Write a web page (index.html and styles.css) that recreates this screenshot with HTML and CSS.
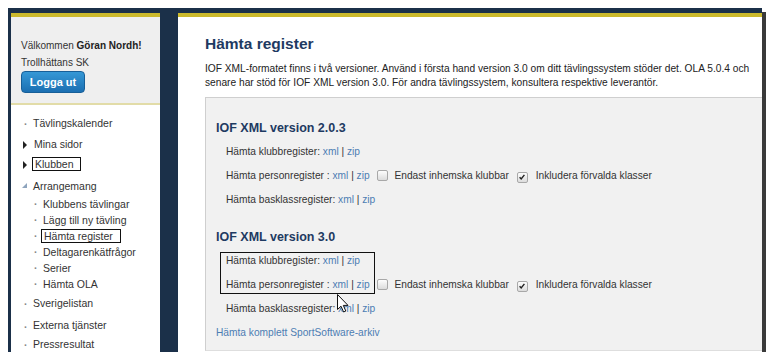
FILE: index.html
```html
<!DOCTYPE html>
<html lang="sv">
<head>
  <meta charset="utf-8">
  <title>Hämta register</title>
  <link rel="stylesheet" href="styles.css">
</head>
<body>

  <div class="frame">
    <aside class="sidebar">
      <div class="welcome">
        <p>Välkommen <b>Göran Nordh!</b></p>
        <p>Trollhättans SK</p>
        <button class="logout">Logga ut</button>
      </div>

      <ul class="nav">
        <li class="dot">Tävlingskalender</li>
        <li class="closed">Mina sidor</li>
        <li class="closed"><span class="mark">Klubben</span></li>
        <li class="open">Arrangemang
          <ul class="sub">
            <li>Klubbens tävlingar</li>
            <li>Lägg till ny tävling</li>
            <li><span class="mark wide">Hämta register</span></li>
            <li>Deltagarenkätfrågor</li>
            <li>Serier</li>
            <li>Hämta OLA</li>
          </ul>
        </li>
        <li class="dot">Sverigelistan</li>
        <li class="dot">Externa tjänster</li>
        <li class="dot">Pressresultat</li>
      </ul>
    </aside>

    <main class="content">
      <h1>Hämta register</h1>
      <p class="intro">IOF XML-formatet finns i två versioner. Använd i första hand version 3.0 om ditt tävlingssystem stöder det. OLA 5.0.4 och senare har stöd för IOF XML version 3.0. För andra tävlingssystem, konsultera respektive leverantör.</p>

      <div class="panel">
        <section class="version">
          <h2>IOF XML version 2.0.3</h2>
          <div class="row">Hämta klubbregister: <a href="#">xml</a> | <a href="#">zip</a></div>
          <div class="row">Hämta personregister : <a href="#">xml</a> | <a href="#">zip</a>
            <span class="cb"></span><span class="cb-label">Endast inhemska klubbar</span>
            <span class="cb checked"><svg viewBox="0 0 10 10" width="8" height="8"><path d="M2 5.2 L4 7.4 L8 2.4" fill="none" stroke="#222" stroke-width="1.8"/></svg></span><span class="cb-label">Inkludera förvalda klasser</span>
          </div>
          <div class="row">Hämta basklassregister: <a href="#">xml</a> | <a href="#">zip</a></div>
        </section>

        <section class="version second">
          <h2>IOF XML version 3.0</h2>
          <div class="row">Hämta klubbregister: <a href="#">xml</a> | <a href="#">zip</a></div>
          <div class="row">Hämta personregister : <a href="#">xml</a> | <a href="#">zip</a>
            <span class="cb"></span><span class="cb-label">Endast inhemska klubbar</span>
            <span class="cb checked"><svg viewBox="0 0 10 10" width="8" height="8"><path d="M2 5.2 L4 7.4 L8 2.4" fill="none" stroke="#222" stroke-width="1.8"/></svg></span><span class="cb-label">Inkludera förvalda klasser</span>
          </div>
          <div class="row">Hämta basklassregister: <a href="#">xml</a> | <a href="#">zip</a></div>
        </section>

        <a class="archive" href="#">Hämta komplett SportSoftware-arkiv</a>

        <!-- annotation box and mouse pointer from the screenshot -->
        <div class="highlight"></div>
        <svg class="pointer" viewBox="0 0 12 19" width="12" height="19">
          <path d="M0.5 0.5 L0.5 15.5 L4 12.2 L6.6 18 L8.8 17 L6.3 11.4 L11 11.4 Z" fill="#fff" stroke="#111" stroke-width="1"/>
        </svg>
      </div>
    </main>
  </div>

</body>
</html>
```

FILE: styles.css
```css
* { box-sizing: border-box; margin: 0; padding: 0; }
body {
  font-family: "Liberation Sans", Arial, sans-serif;
  font-size: 10.2px;
  color: #333;
  background: #fff;
}
a { color: #4d7db3; text-decoration: none; }

.frame {
  display: flex;
  gap: 18px;
  margin: 8px 0 0 8px;
  width: 754px;
  height: 344px;
  background: #1b3049;
  border-top: 5px solid #1b3049;
  border-left: 3px solid #1b3049;
  box-shadow: 4px 4px 0 #3a3a3a;
  overflow: hidden;
}

/* left column */
.sidebar {
  width: 149px;
  flex: none;
  background: #fff;
  border-top: 4px solid #cbb92c;
  font-size: 10.5px;
}
.welcome {
  background: #efefef;
  padding: 20px 0 10px 10px;
  border-bottom: 2px solid #e2dca8;
  font-size: 10px;
  line-height: 17px;
  color: #333;
}
.welcome b { color: #222; }
.logout {
  display: block;
  margin-top: 0;
  width: 64px; height: 22px;
  background: linear-gradient(#3598d6, #1b6fb2);
  border: 1px solid #175f98;
  border-radius: 4px;
  color: #fff;
  font: bold 11px "Liberation Sans", Arial, sans-serif;
}
.nav { list-style: none; padding: 8px 0 0 11px; line-height: 20px; }
.nav > li::before {
  content: "";
  display: inline-block;
  width: 11px;
  vertical-align: middle;
}
.nav > li.dot::before { content: "·"; color: #888; font-weight: bold; text-indent: 2px; }
.nav > li.closed::before {
  width: 0; height: 0;
  border-left: 4px solid #222;
  border-top: 4px solid transparent;
  border-bottom: 4px solid transparent;
  margin: 0 7px 1px 1px;
}
.nav > li.open { margin-top: 2px; }
.nav > li.open::before {
  width: 0; height: 0;
  border-bottom: 5px solid #8ea4bd;
  border-left: 5px solid transparent;
  margin: 0 6px 3px 0;
}
.nav > li.open + li { margin-top: 1px; }
.nav > li.dot + li.dot { margin-top: 1px; }
.nav > li:last-child { line-height: 12px; margin-top: 5px; }
.sub { list-style: none; padding-left: 11px; line-height: 16px; }
.sub li::before {
  content: "·";
  display: inline-block;
  width: 10px;
  text-indent: 1px;
  color: #888;
  font-weight: bold;
}
.mark {
  border: 1px solid #111;
  padding: 0 6px 0 2px;
  margin-left: -2px;
}
.mark.wide { padding: 0 7px 0 2px; }

/* main column */
.content {
  flex: 1;
  display: flex;
  flex-direction: column;
  background: #fff;
  border-top: 4px solid #cbb92c;
}
.content h1 {
  font-size: 15.5px;
  line-height: 20px;
  color: #1e3a62;
  padding: 17px 0 0 27px;
  margin-bottom: 8px;
}
.intro {
  padding: 0 12px 0 27px;
  line-height: 14px;
  color: #222;
  margin-bottom: 7px;
}
.panel {
  position: relative;
  flex: 1;
  margin: 0 0 1px 27px;
  background: #f1f1f1;
  border-top: 1px solid #cfcfcf;
  border-left: 1px solid #cfcfcf;
  border-bottom: 1px solid #dedede;
  padding: 22px 0 0 10px;
}
.version h2 {
  font-size: 12.5px;
  line-height: 16px;
  color: #1e3a62;
  margin-bottom: 4px;
}
.version.second { margin-top: 17px; }
.row { padding-left: 10px; line-height: 24px; color: #333; }
.cb {
  display: inline-block;
  width: 11px; height: 11px;
  margin: 0 6px 0 5px;
  vertical-align: -2px;
  border: 1px solid #a8a8a8;
  border-radius: 2px;
  background: linear-gradient(#fdfdfd, #dcdcdc);
  text-align: center;
  line-height: 8px;
}
.cb.checked { margin-right: 8px; }
.archive { display: block; margin-top: 4px; line-height: 16px; }

.highlight {
  position: absolute;
  left: 14px; top: 154px;
  width: 155px; height: 42px;
  border: 1px solid #111;
}
.pointer { position: absolute; left: 131px; top: 196px; }
```
